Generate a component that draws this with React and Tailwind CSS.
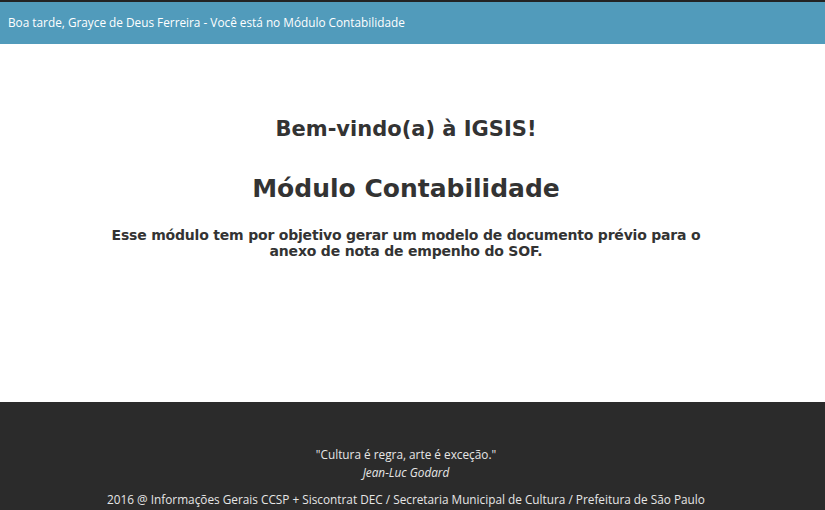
import React from 'react';

export default function App() {
  const heading = { fontFamily: '"DejaVu Sans", "Open Sans", sans-serif' };

  return (
    <div className="flex h-[510px] flex-col bg-white font-['Open_Sans',sans-serif]">
      {/* Top bar */}
      <header className="h-[44px] border-t-2 border-[#232323] bg-[#519bbb] flex items-center px-2">
        <span className="text-[11.8px] text-white">
          Boa tarde, Grayce de Deus Ferreira - Você está no Módulo Contabilidade
        </span>
      </header>

      {/* Content */}
      <main className="flex-1 pr-[13px] text-center text-[#333]" style={heading}>
        <h1 className="mt-[70px] text-[21px] font-bold">Bem-vindo(a) à IGSIS!</h1>
        <h2 className="mt-[24px] text-[25px] font-bold">Módulo Contabilidade</h2>
        <p className="mx-auto mt-[20px] w-[600px] text-[14px] font-bold leading-[16px] tracking-[-0.2px]">
          Esse módulo tem por objetivo gerar um modelo de documento prévio para o anexo de nota de empenho do SOF.
        </p>
      </main>

      {/* Footer */}
      <footer className="h-[108px] bg-[#2b2b2b] pr-[13px] pt-[43px] text-center text-[11.8px] text-[#e6e6e6]">
        <p className="leading-[18px]">"Cultura é regra, arte é exceção."</p>
        <p className="italic leading-[18px]">Jean-Luc Godard</p>
        <p className="mt-[9px] leading-[18px]">
          2016 @ Informações Gerais CCSP + Siscontrat DEC / Secretaria Municipal de Cultura / Prefeitura de São Paulo
        </p>
      </footer>
    </div>
  );
}
